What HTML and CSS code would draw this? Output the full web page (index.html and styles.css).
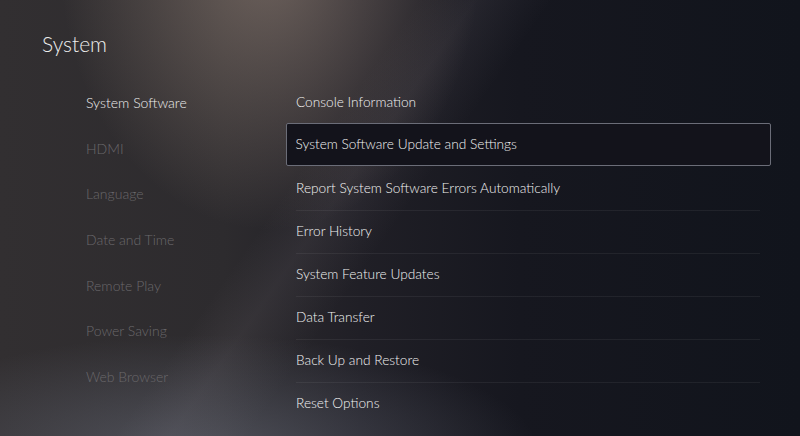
FILE: index.html
```html
<!DOCTYPE html>
<html lang="en">
<head>
  <meta charset="UTF-8" />
  <title>System</title>
  <meta name="viewport" content="width=device-width, initial-scale=1.0">
  <link rel="stylesheet" href="styles.css">
</head>
<body>
  <div class="screen">
    <h1 class="title">System</h1>

    <div class="content">
      <nav class="side">
        <div class="side-item active">System Software</div>
        <div class="side-item">HDMI</div>
        <div class="side-item">Language</div>
        <div class="side-item">Date and Time</div>
        <div class="side-item">Remote Play</div>
        <div class="side-item">Power Saving</div>
        <div class="side-item">Web Browser</div>
      </nav>

      <ul class="options">
        <li class="option">Console Information</li>
        <li class="option focused">System Software Update and Settings</li>
        <li class="option">Report System Software Errors Automatically</li>
        <li class="option">Error History</li>
        <li class="option">System Feature Updates</li>
        <li class="option">Data Transfer</li>
        <li class="option">Back Up and Restore</li>
        <li class="option">Reset Options</li>
      </ul>
    </div>
  </div>
</body>
</html>
```

FILE: styles.css
```css
html, body {
  margin: 0;
  padding: 0;
}

body {
  width: 800px;
  height: 436px;
  overflow: hidden;
  font-family: Lato, 'Open Sans', sans-serif;
  background-color: #14161f;
}

.screen {
  position: relative;
  width: 800px;
  height: 436px;
  overflow: hidden;
  background:
    radial-gradient(ellipse 210px 270px at 270px -40px, rgba(165, 145, 132, 0.55), rgba(165, 145, 132, 0) 100%),
    radial-gradient(ellipse 340px 120px at 200px 455px, rgba(115, 120, 135, 0.5), rgba(115, 120, 135, 0) 100%),
    linear-gradient(125deg, rgba(255, 255, 255, 0) 38%, rgba(150, 140, 150, 0.10) 43%, rgba(255, 255, 255, 0) 50%),
    linear-gradient(90deg, #322f31 0%, #2d2b2e 28%, #201f26 45%, #16171f 65%, #11141c 100%);
}

.title {
  margin: 0;
  padding: 28px 0 0 42px;
  font-size: 21px;
  font-weight: 300;
  line-height: 32px;
  color: #ededed;
}

.content {
  display: flex;
  margin-top: 20px;
  padding-left: 86px;
}

.side {
  width: 200px;
  display: flex;
  flex-direction: column;
}

.side-item {
  height: 45.7px;
  line-height: 45.7px;
  font-size: 14px;
  font-weight: 300;
  color: #6a686b;
}

.side-item.active {
  color: #ededed;
}

.options {
  list-style: none;
  margin: 0;
  padding: 0;
  width: 485px;
}

.option {
  box-sizing: border-box;
  height: 43px;
  line-height: 42px;
  padding-left: 10px;
  font-size: 13.7px;
  font-weight: 300;
  color: #f2f2f2;
  border-top: 1px solid transparent;
  background-image: linear-gradient(rgba(255, 255, 255, 0.06), rgba(255, 255, 255, 0.06));
  background-size: 464px 1px;
  background-position: 10px 0;
  background-repeat: no-repeat;
}

.option:first-child {
  background-image: none;
}

.option.focused {
  border: 1.5px solid #6b6d78;
  border-radius: 2px;
  background: #13131b;
  line-height: 40px;
  padding-left: 8.5px;
}

.option.focused + .option {
  background-image: none;
}
```
